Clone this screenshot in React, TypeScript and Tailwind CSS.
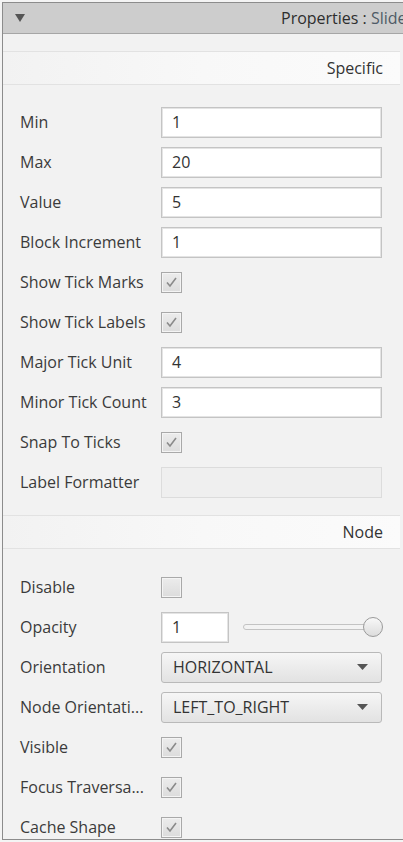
import React from "react";

const font = { fontFamily: '"Open Sans", "Noto Sans", sans-serif' };

function TextField({ value, w = "w-[221px]", disabled = false }: { value: string; w?: string; disabled?: boolean }) {
  return (
    <div
      className={`${w} h-[31px] flex items-center pl-[10px] text-[16px] text-[#333] border ${
        disabled ? "bg-[#efefef] border-[#dcdcdc]" : "bg-white border-[#c4c4c4] shadow-[inset_0_0_0_1px_#e4e4e4]"
      }`}
    >
      {value}
    </div>
  );
}

function Check({ checked = true }: { checked?: boolean }) {
  return (
    <div className="w-[21px] h-[21px] border border-[#a9a9a9] bg-gradient-to-b from-[#ececec] to-[#dcdcdc] shadow-[inset_0_0_0_1px_#f4f4f4] flex items-center justify-center">
      {checked && (
        <svg width="13" height="12" viewBox="0 0 13 12">
          <path d="M2 6.5 L5 10 L11 2" fill="none" stroke="#8a8a8a" strokeWidth="1.6" />
        </svg>
      )}
    </div>
  );
}

function Combo({ value }: { value: string }) {
  return (
    <div className="w-[221px] h-[31px] flex items-center justify-between pl-[11px] pr-[13px] text-[16px] text-[#333] border border-[#b9b9b9] rounded-[3px] bg-gradient-to-b from-[#f6f6f6] to-[#e2e2e2]">
      <span>{value}</span>
      <svg width="11" height="6" viewBox="0 0 11 6">
        <path d="M0 0 H11 L5.5 6 Z" fill="#555" />
      </svg>
    </div>
  );
}

function Row({ label, children }: { label: string; children?: React.ReactNode }) {
  return (
    <div className="h-[40px] shrink-0 flex items-center">
      <div className="w-[158px] pl-[17px] text-[16px] text-[#3b3b3b] whitespace-nowrap">{label}</div>
      {children}
    </div>
  );
}

function SectionHeader({ title }: { title: string }) {
  return (
    <div className="h-[34px] shrink-0 mr-[3px] border-t border-b border-[#e2e2e2] bg-gradient-to-r from-[#f2f2f2] via-[#f8f8f8] to-[#fbfbfb] flex items-center justify-end pr-[17px] text-[16px] text-[#333]">
      {title}
    </div>
  );
}

export default function App() {
  return (
    <div className="w-[403px] h-[842px] bg-[#f4f4f4] overflow-hidden pt-[2px] pl-[2px]" style={font}>
      <div className="h-[838px] border-l border-t border-b border-[#8c8c8c] bg-[#f2f2f2] flex flex-col overflow-hidden">
        <div className="h-[31px] shrink-0 bg-[#cdcdcd] border-b border-[#a6a6a6] flex items-center overflow-hidden">
          <svg width="10" height="8" viewBox="0 0 10 8" className="ml-[12px] shrink-0">
            <path d="M0 0 H10 L5 8 Z" fill="#555" />
          </svg>
          <div className="ml-[256px] whitespace-nowrap text-[16px] shrink-0">
            <span className="text-[#2e2e2e]">Properties : </span>
            <span className="text-[#4f5b66]">Slider</span>
          </div>
        </div>
        <div className="h-[17px] shrink-0" />
        <SectionHeader title="Specific" />
        <div className="pt-[17px] shrink-0 flex flex-col">
          <Row label="Min"><TextField value="1" /></Row>
          <Row label="Max"><TextField value="20" /></Row>
          <Row label="Value"><TextField value="5" /></Row>
          <Row label="Block Increment"><TextField value="1" /></Row>
          <Row label="Show Tick Marks"><Check /></Row>
          <Row label="Show Tick Labels"><Check /></Row>
          <Row label="Major Tick Unit"><TextField value="4" /></Row>
          <Row label="Minor Tick Count"><TextField value="3" /></Row>
          <Row label="Snap To Ticks"><Check /></Row>
          <Row label="Label Formatter"><TextField value="" disabled /></Row>
        </div>
        <div className="h-[13px] shrink-0" />
        <SectionHeader title="Node" />
        <div className="pt-[18px] shrink-0 flex flex-col">
          <Row label="Disable"><Check checked={false} /></Row>
          <Row label="Opacity">
            <TextField value="1" w="w-[68px]" />
            <div className="ml-[14px] w-[140px] h-[20px] flex items-center">
              <div className="flex-1 h-[6px] rounded-full border border-[#c3c3c3] bg-[#f3f3f3]" />
              <div className="-ml-[6px] w-[20px] h-[20px] rounded-full border border-[#9a9a9a] bg-gradient-to-b from-[#f8f8f8] to-[#dcdcdc]" />
            </div>
          </Row>
          <Row label="Orientation"><Combo value="HORIZONTAL" /></Row>
          <Row label="Node Orientati..."><Combo value="LEFT_TO_RIGHT" /></Row>
          <Row label="Visible"><Check /></Row>
          <Row label="Focus Traversa..."><Check /></Row>
          <Row label="Cache Shape"><Check /></Row>
        </div>
      </div>
    </div>
  );
}
